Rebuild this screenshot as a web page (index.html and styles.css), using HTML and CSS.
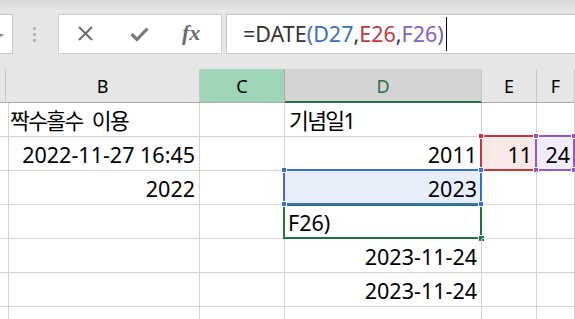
FILE: index.html
```html
<!DOCTYPE html>
<html lang="ko">
<head>
  <meta charset="UTF-8">
  <meta name="viewport" content="width=device-width, initial-scale=1.0">
  <title>DATE</title>
  <link rel="stylesheet" href="styles.css">
</head>

<body>
  <!-- Formula bar -->
  <div class="toolbar">
    <div class="namebox"><span class="arrow"></span></div>
    <div class="grip"><span></span><span></span><span></span></div>
    <div class="fnbox">
      <svg class="ico-x" width="17" height="16" viewBox="0 0 17 16">
        <path d="M2 1 L15 14 M15 1 L2 14" stroke="#6b6b6b" stroke-width="2" fill="none"/>
      </svg>
      <svg class="ico-ok" width="19" height="15" viewBox="0 0 19 15">
        <path d="M1.5 7 L7 12.5 L17.5 1.5" stroke="#7a7a7a" stroke-width="3.2" fill="none"/>
      </svg>
      <span class="fx">fx</span>
    </div>
    <div class="formula">
      <span class="ftext">=DATE<span class="p-blue">(</span><span class="ref-blue">D27</span>,<span class="ref-red">E26</span>,<span class="ref-purple">F26</span><span class="p-purple">)</span></span>
      <span class="caret"></span>
    </div>
  </div>

  <!-- Sheet -->
  <div class="sheet">
    <!-- column headers -->
    <div class="hd"></div>
    <div class="hd">B</div>
    <div class="hd hd-sel">C</div>
    <div class="hd hd-act">D</div>
    <div class="hd">E</div>
    <div class="hd">F</div>
    <div class="hd"></div>

    <!-- row 1 -->
    <div class="c"></div>
    <div class="c"><span class="ko">짝수홀수 이용</span></div>
    <div class="c"></div>
    <div class="c"><span class="ko">기념일1</span></div>
    <div class="c"></div>
    <div class="c"></div>
    <div class="c"></div>

    <!-- row 2 -->
    <div class="c"></div>
    <div class="c r">2022-11-27 16:45</div>
    <div class="c"></div>
    <div class="c r">2011</div>
    <div class="c r">
      <div class="sel sel-red"><i class="h tl"></i><i class="h tr"></i><i class="h bl"></i><i class="h br"></i></div>
      <span class="val">11</span>
    </div>
    <div class="c r">
      <div class="sel sel-purple"><i class="h tl"></i><i class="h tr"></i><i class="h bl"></i><i class="h br"></i></div>
      <span class="val">24</span>
    </div>
    <div class="c"></div>

    <!-- row 3 -->
    <div class="c"></div>
    <div class="c r">2022</div>
    <div class="c"></div>
    <div class="c r">
      <div class="sel sel-blue"><i class="h tl"></i><i class="h tr"></i><i class="h bl"></i><i class="h br"></i></div>
      <span class="val">2023</span>
    </div>
    <div class="c"></div>
    <div class="c"></div>
    <div class="c"></div>

    <!-- row 4 (editing) -->
    <div class="c"></div>
    <div class="c"></div>
    <div class="c"></div>
    <div class="c">
      <div class="active"><i class="fill"></i></div>
      <span class="val edit">F26)</span>
    </div>
    <div class="c"></div>
    <div class="c"></div>
    <div class="c"></div>

    <!-- row 5 -->
    <div class="c"></div>
    <div class="c"></div>
    <div class="c"></div>
    <div class="c r">2023-11-24</div>
    <div class="c"></div>
    <div class="c"></div>
    <div class="c"></div>

    <!-- row 6 -->
    <div class="c"></div>
    <div class="c"></div>
    <div class="c"></div>
    <div class="c r">2023-11-24</div>
    <div class="c"></div>
    <div class="c"></div>
    <div class="c"></div>

    <!-- row 7 -->
    <div class="c"></div>
    <div class="c"></div>
    <div class="c"></div>
    <div class="c"></div>
    <div class="c"></div>
    <div class="c"></div>
    <div class="c"></div>
  </div>
</body>

</html>
```

FILE: styles.css
```css
* {
    box-sizing: border-box;
}
body {
    margin: 0;
    overflow: hidden;
    height: 319px;
    background: white;
    font-family: "Noto Sans", "Noto Sans CJK KR", sans-serif;
    color: #000;
}

/* Formula bar */
.toolbar {
    height: 69px;
    display: flex;
    align-items: flex-start;
    padding-top: 14px;
    background: linear-gradient(#d6d6d6, #e6e6e6 10px);
}
.namebox {
    width: 13px;
    height: 40px;
    background: white;
    border: 1px solid #c6c6c6;
    border-left: none;
    display: flex;
    align-items: center;
}
.arrow {
    margin-left: -2px;
    margin-top: 2px;
    border-left: 3px solid transparent;
    border-right: 3px solid transparent;
    border-top: 3px solid #888;
}
.grip {
    margin-left: 20px;
    margin-top: 13px;
    display: flex;
    flex-direction: column;
    gap: 3px;
}
.grip span {
    width: 3px;
    height: 3px;
    background: #b6b6b6;
}
.fnbox {
    margin-left: 22px;
    width: 164px;
    height: 40px;
    background: white;
    border: 1px solid #cfcfcf;
    display: flex;
    align-items: center;
}
.ico-x {
    margin-left: 18px;
}
.ico-ok {
    margin-left: 36px;
    margin-top: 1px;
}
.fx {
    margin-left: 33px;
    font-family: "Liberation Serif", serif;
    font-style: italic;
    font-weight: bold;
    font-size: 22px;
    color: #6b6b6b;
    margin-top: -2px;
}
.formula {
    flex: 1;
    margin-left: 4px;
    margin-right: -2px;
    height: 40px;
    background: white;
    border: 1px solid #c6c6c6;
    display: flex;
    align-items: center;
    padding-left: 16px;
    font-size: 21.5px;
    color: #333;
}
.ftext {
    white-space: nowrap;
    margin-top: -1px;
}
.ref-blue { color: #3b6fc6; }
.ref-red { color: #c5383c; }
.ref-purple { color: #8a5cc2; }
.p-blue { color: #4f6fb0; }
.p-purple { color: #7a5aa8; }
.caret {
    width: 1px;
    height: 34px;
    margin-left: 2px;
    background: #000;
}

/* Sheet grid */
.sheet {
    display: grid;
    grid-template-columns: 6px 194px 85px 197px 55px 38px 1fr;
    grid-template-rows: repeat(8, 34px);
}
.hd {
    background: #e6e6e6;
    border-right: 1px solid #c9c9c9;
    border-bottom: 1px solid #ababab;
    display: flex;
    align-items: center;
    justify-content: center;
    font-size: 18px;
    padding-top: 1px;
}
.hd-sel {
    background: #9fd5b7;
    border-right-color: #a9a9a9;
}
.hd-act {
    background: #d3d3d3;
    color: #217346;
    border-bottom: 2px solid #217346;
}
.c {
    position: relative;
    border-right: 1px solid #d4d4d4;
    border-bottom: 1px solid #d4d4d4;
    display: flex;
    align-items: flex-end;
    padding: 0 4px 2px 4px;
    font-size: 21.5px;
    line-height: 26px;
    white-space: nowrap;
}
.r {
    justify-content: flex-end;
}
.ko {
    letter-spacing: -1.6px;
    word-spacing: 5px;
}
.val {
    position: relative;
}
.edit {
    margin-left: -1px;
}

/* Reference highlights */
.sel {
    position: absolute;
    top: -2px;
    left: -2px;
    right: -1px;
    bottom: -1px;
    border: 2px solid;
}
.sel-red {
    border-color: #c5383c;
    background: #f9e8e8;
}
.sel-purple {
    border-color: #8a5cc2;
    background: #f1ecf8;
}
.sel-blue {
    border-color: #3b6fc6;
    background: #e8eef9;
    z-index: 2;
}
.sel-blue + .val {
    z-index: 3;
}
.h {
    position: absolute;
    width: 6px;
    height: 6px;
    border: 1px solid white;
}
.sel-red .h { background: #c5383c; }
.sel-purple .h { background: #8a5cc2; }
.sel-blue .h { background: #3b6fc6; }
.tl { top: -4px; left: -4px; }
.tr { top: -4px; right: -4px; }
.bl { bottom: -4px; left: -4px; }
.br { bottom: -4px; right: -4px; }

/* Active cell */
.active {
    position: absolute;
    top: -1px;
    left: -2px;
    right: -1px;
    bottom: -1px;
    border: 2px solid #217346;
}
.fill {
    position: absolute;
    right: -5px;
    bottom: -5px;
    width: 7px;
    height: 7px;
    background: #217346;
    border: 1px solid white;
}
```
